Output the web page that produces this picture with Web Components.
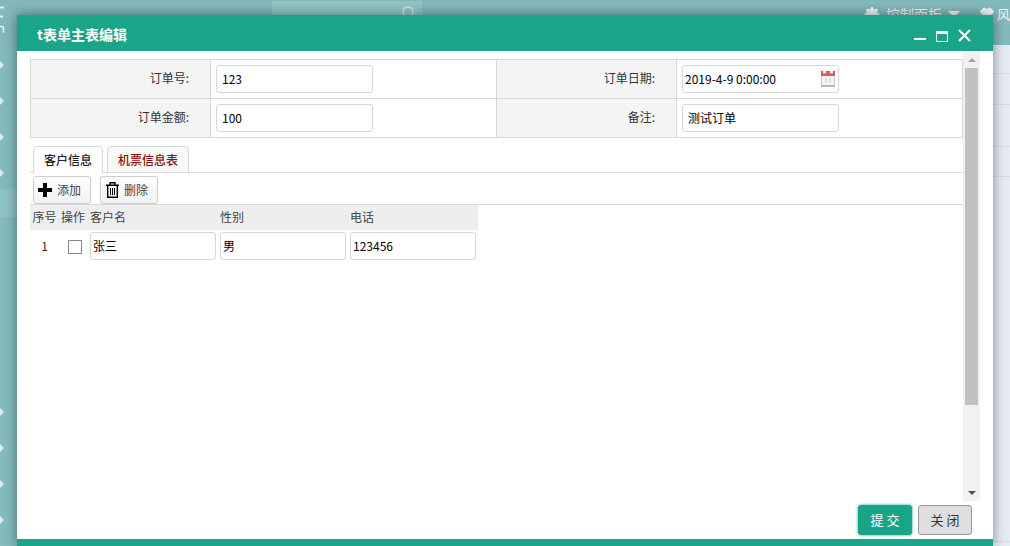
<!DOCTYPE html>
<html lang="zh-CN">
<head>
<meta charset="utf-8">
<title>t表单主表编辑</title>
<style>
html, body { margin: 0; height: 100%; overflow: hidden; }
body { font: 12px/18px "Noto Sans CJK SC", sans-serif; color: #333; }
</style>
</head>
<body>
<app-backdrop></app-backdrop>
<edit-dialog heading="t表单主表编辑">
  <order-form></order-form>
  <detail-tabs>
    <customer-grid></customer-grid>
  </detail-tabs>
</edit-dialog>

<script>
const define = (name, html, setup) => {
  const tpl = document.createElement('template');
  tpl.innerHTML = '<style>*{box-sizing:border-box}</style>' + html;
  customElements.define(name, class extends HTMLElement {
    constructor() {
      super();
      this.attachShadow({ mode: 'open' }).append(tpl.content.cloneNode(true));
    }
    connectedCallback() { if (setup) setup(this, this.shadowRoot); }
  });
};

define('app-backdrop', `
<style>
:host { display: flex; flex-direction: column; height: 100vh; background: #e7ebf4; }
header { flex: none; display: flex; align-items: flex-start; height: 45px; background: #84b9bb; overflow: hidden; color: #eef6f7; }
.brand { width: 272px; padding-top: 6px; }
.brand svg { display: block; }
.search { display: flex; justify-content: flex-end; width: 150px; height: 28px; margin-top: 1px; padding: 5px 7px; background: #92c5c6; }
nav { display: flex; gap: 20px; margin-left: auto; padding-top: 4px; font-size: 14px; line-height: 20px; white-space: nowrap; }
nav a { display: flex; align-items: center; gap: 6px; color: inherit; text-decoration: none; }
nav .skin { gap: 3px; font-size: 13px; }
.page { flex: 1; display: flex; min-height: 0; }
aside { width: 100px; background: #84bbbf; padding-top: 2px; }
aside i { display: flex; align-items: center; height: 36px; }
aside i::before { content: ""; border: solid transparent; border-width: 4px 0 4px 4px; border-left-color: #dcebf7; }
aside .open { height: 28px; margin-top: -2px; background: #8dc3c6; }
aside .open::before, aside .rest::before { content: none; }
aside .rest { height: 177px; }
main { flex: 1; }
main div { border-bottom: 1px solid #d5dae8; }
.a { height: 29px; } .b { height: 31px; } .c { height: 42px; } .d { height: 30px; } .e { height: 365px; }
</style>
<header>
  <div class="brand"><svg width="6" height="28" viewBox="0 0 6 28" fill="none" stroke="#e4f1f2"><path d="M0 1.500H4M0 10.500H3" stroke-width="2"/><path d="M0 20.500H2Q3.500 20.500 3.500 22V27" stroke-width="1.500"/></svg></div>
  <div class="search"><svg width="14" height="14" viewBox="0 0 14 14" fill="none" stroke="#c2dfe0" stroke-width="2"><circle cx="7" cy="6" r="5"/><path d="M10 10l3 4"/></svg></div>
  <nav>
    <a href="#"><svg width="16" height="16" viewBox="0 0 16 16" fill="currentColor"><path d="M7 1h2l1 2.500 2.500-1L14 4l-1 2.500 2.500 1v2l-2.500 1 1 2.500-1.500 1.500-2.500-1-1 2.500H7l-1-2.500-2.500 1L2 12.500 3 10 .5 9V7.500l2.500-1L2 4l1.500-1.500 2.500 1z"/></svg>控制面板<svg width="12" height="8" viewBox="0 0 12 8" fill="currentColor"><path d="M0 1h12L6 7z"/></svg></a>
    <a class="skin" href="#"><svg width="14" height="16" viewBox="0 0 14 16" fill="currentColor"><path d="M3 2l2-.5Q7 4 9 1.500L11 2l3 3.500L12 9l-1-1v7H3V8L2 9 0 5.500z"/></svg>风</a>
  </nav>
</header>
<div class="page">
  <aside><i></i><i></i><i></i><i></i><i class="open"></i><i class="rest"></i><i></i><i></i><i></i><i></i></aside>
  <main><div class="a"></div><div class="b"></div><div class="c"></div><div class="d"></div><div class="e"></div></main>
</div>`);

define('edit-dialog', `
<style>
:host { position: absolute; inset: 15px 17px 0; display: flex; flex-direction: column; background: #fff; box-shadow: 0 0 12px rgba(0,0,0,.45); }
header { flex: none; display: flex; align-items: center; height: 36px; padding: 0 22px 0 20px; background: #1aa588; color: #fff; }
h1 { flex: 1; margin: 0; padding-top: 2px; font-size: 14px; line-height: 20px; }
.tools { display: flex; gap: 8px; padding-top: 6px; }
.tools button { display: block; padding: 0; border: 0; background: none; color: #fff; }
svg { display: block; }
.body { flex: 1; min-height: 0; display: flex; padding: 0 13px; }
.content { flex: 1; min-width: 0; padding-top: 8px; overflow: hidden; }
footer { flex: none; display: flex; justify-content: flex-end; gap: 6px; height: 38px; padding: 4px 21px 4px 0; }
footer button { width: 54px; height: 30px; padding: 0; border: 1px solid #999; border-radius: 3px; background: #dedede; color: #333; font: 13px/20px "Noto Sans CJK SC", sans-serif; }
footer .ok { border-color: #1aa588; background: #1aa588; color: #fff; box-shadow: 0 0 3px #1aa588; }
.edge { flex: none; height: 7px; background: #1aa588; }
</style>
<header>
  <h1></h1>
  <div class="tools">
    <button aria-label="最小化"><svg width="14" height="14" viewBox="0 0 14 14"><path d="M1 9h12v2H1z" fill="#fff"/></svg></button>
    <button aria-label="最大化"><svg width="14" height="14" viewBox="0 0 14 14"><path d="M1 2h12v11H1zM2 5v7h10V5z" fill="#fff" fill-rule="evenodd"/></svg></button>
    <button aria-label="关闭窗口"><svg width="14" height="14" viewBox="0 0 14 14"><path d="M2 1l11 11M13 1L2 12" stroke="#fff" stroke-width="2"/></svg></button>
  </div>
</header>
<div class="body"><div class="content"><slot></slot></div><scroll-track></scroll-track></div>
<footer><button class="ok">提 交</button><button>关 闭</button></footer>
<div class="edge"></div>`, (host, root) => { root.querySelector('h1').textContent = host.getAttribute('heading'); });

define('scroll-track', `
<style>
:host { flex: none; display: flex; flex-direction: column; width: 17px; background: #f1f1f1; }
.arrow { flex: none; display: flex; align-items: center; justify-content: center; height: 17px; }
.rail { flex: 1; padding: 0 2px; }
.thumb { height: 81%; background: #c1c1c1; }
</style>
<div class="arrow"><svg width="8" height="4" viewBox="0 0 8 4"><path d="M4 0l4 4H0z" fill="#a3a3a3"/></svg></div>
<div class="rail"><div class="thumb"></div></div>
<div class="arrow"><svg width="8" height="4" viewBox="0 0 8 4"><path d="M0 0h8L4 4z" fill="#505050"/></svg></div>`);

define('text-field', `
<style>
:host { position: relative; display: block; width: 157px; }
:host([compact]) { width: 126px; }
input { display: block; width: 100%; height: 28px; padding: 0 5px 2px; border: 1px solid #d3d8d8; border-radius: 3px; background: #fff; color: #000; font: 12px/18px "Noto Sans CJK SC", sans-serif; outline: 0; }
:host([compact]) input, :host([date]) input { padding: 0 2px 2px; }
svg { display: none; position: absolute; right: 3px; top: 5px; }
:host([date]) svg { display: block; }
</style>
<input type="text">
<svg width="15" height="17" viewBox="0 0 15 17"><path d="M0 5h14v11H0z" fill="#f4f4f4"/><path d="M.5 5v10.500H13.500V5" fill="none" stroke="#c9c9c9"/><path d="M0 15h14v2H0z" fill="#b9b9b9"/><path d="M0 1h14v5H0z" fill="#d0615e"/><circle cx="3.500" cy="2" r="1.500" fill="#fff"/><circle cx="10.500" cy="2" r="1.500" fill="#fff"/><path d="M5 8v5M9 8v5M4 9h1M8 9h1" stroke="#ccc" fill="none"/></svg>`,
(host, root) => {
  const input = root.querySelector('input');
  input.value = host.getAttribute('value');
  input.setAttribute('aria-label', host.getAttribute('label'));
});

define('order-form', `
<style>
table { width: 100%; border-collapse: collapse; table-layout: fixed; }
th, td { height: 39px; padding: 0 5px; border: 1px solid #d2dada; text-align: left; }
th { width: 180px; padding: 0 21px 2px 5px; background: #f4f4f4; font-weight: 400; text-align: right; }
:host { display: block; }
</style>
<table>
  <tr><th scope="row">订单号:</th><td><text-field label="订单号" value="123"></text-field></td><th scope="row">订单日期:</th><td><text-field date label="订单日期" value="2019-4-9 0:00:00"></text-field></td></tr>
  <tr><th scope="row">订单金额:</th><td><text-field label="订单金额" value="100"></text-field></td><th scope="row">备注:</th><td><text-field label="备注" value="测试订单"></text-field></td></tr>
</table>`);

define('detail-tabs', `
<style>
:host { display: block; margin-top: 8px; }
.tabs { display: flex; gap: 4px; height: 27px; padding-left: 3px; border-bottom: 1px solid #d8dcdc; }
.tabs button { height: 26px; padding: 0 10px; border: 1px solid #d3d8d8; border-bottom: 0; border-radius: 5px 5px 0 0; background: #f8f8f8; color: #8b1010; font: 12px/18px "Noto Sans CJK SC", sans-serif; font-weight: 500; }
.tabs .on { height: 27px; background: #fff; color: #222; }
</style>
<div class="tabs" role="tablist"><button class="on" role="tab" aria-selected="true">客户信息</button><button role="tab" aria-selected="false">机票信息表</button></div>
<slot></slot>`);

define('customer-grid', `
<style>
:host { display: block; }
.bar { display: flex; gap: 9px; padding: 3px 3px 0; border-bottom: 1px solid #d8d8d8; }
.bar button { display: flex; align-items: center; gap: 4px; width: 58px; height: 28px; padding: 0 4px; border: 1px solid #ccc; border-radius: 3px; background: linear-gradient(#fff, #f1f1f1); color: #444; font: 12px/18px "Noto Sans CJK SC", sans-serif; white-space: nowrap; }
svg { display: block; flex: none; }
table { width: 448px; border-collapse: collapse; table-layout: fixed; }
th, td { padding: 0 2px; font-weight: 400; text-align: left; white-space: nowrap; }
th { height: 25px; padding-bottom: 2px; background: #eee; color: #444; }
td { height: 32px; }
.n { width: 29px; text-align: center; }
.s { width: 29px; }
input { display: block; appearance: none; width: 14px; height: 14px; margin: 2px 0 0 7px; border: 1px solid #888; background: #fff; }
</style>
<div class="bar">
  <button><svg width="15" height="14" viewBox="0 0 15 14"><path d="M5 0h4v5h5v4H9v5H5V9H0V5h5z"/></svg>添加</button>
  <button><svg width="15" height="16" viewBox="0 0 15 16" fill="none" stroke="#000"><path d="M5 2.500V.7h5v1.800M1 3.200h13" stroke-width="1.400"/><path d="M2.700 4v11.200h9.600V4" stroke-width="1.400"/><path d="M5.500 6v7M7.500 6v7M9.500 6v7"/></svg>删除</button>
</div>
<table>
  <thead><tr><th class="n" scope="col">序号</th><th class="s" scope="col">操作</th><th scope="col">客户名</th><th scope="col">性别</th><th scope="col">电话</th></tr></thead>
  <tbody><tr><td class="n">1</td><td><input type="checkbox" aria-label="选择第1行"></td><td><text-field compact label="客户名" value="张三"></text-field></td><td><text-field compact label="性别" value="男"></text-field></td><td><text-field compact label="电话" value="123456"></text-field></td></tr></tbody>
</table>`);
</script>
</body>
</html>
